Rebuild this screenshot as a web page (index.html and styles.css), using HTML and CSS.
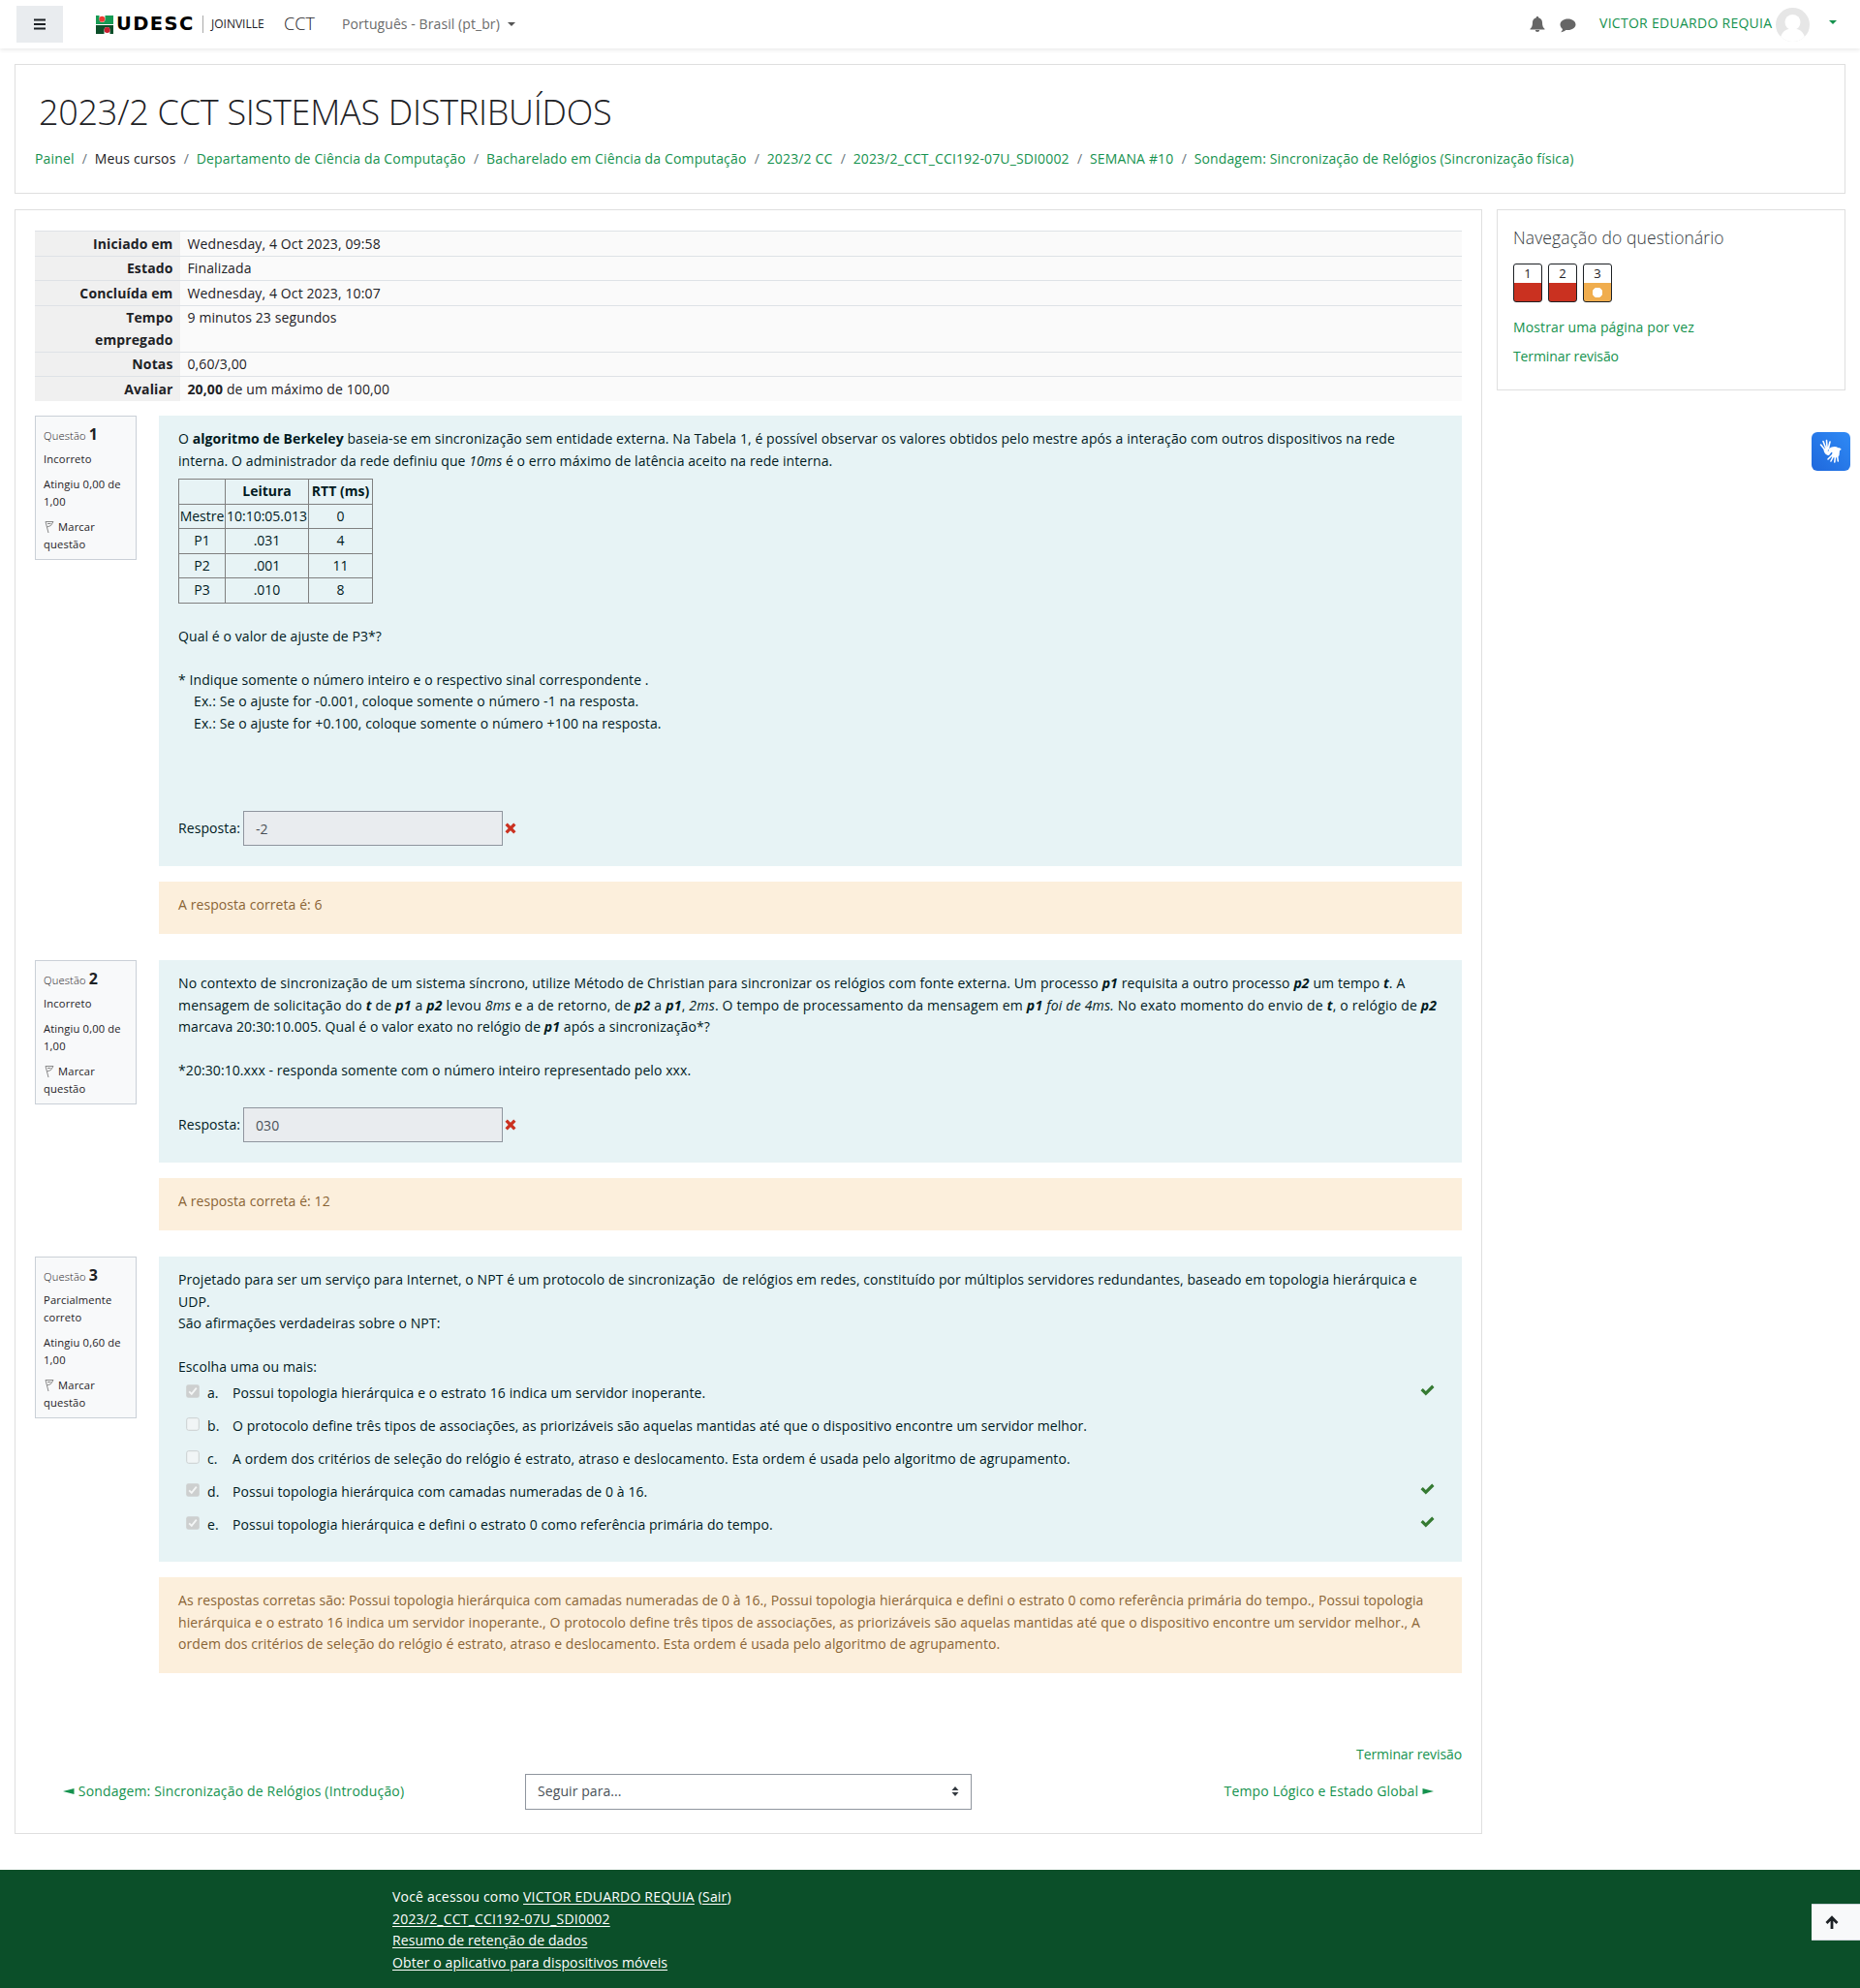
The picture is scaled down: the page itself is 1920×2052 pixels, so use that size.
FILE: index.html
```html
<!DOCTYPE html>
<html lang="pt-br">
<head>
<meta charset="utf-8">
<title>Sondagem: Sincronização de Relógios</title>
<link rel="stylesheet" href="styles.css">
</head>
<body>
<svg class="defs" width="0" height="0">
  <symbol id="flag" viewBox="0 0 10 14"><path d="M1 1.500l3 11.500M1 1.500h8L6.500 5.500l-4 1.500M3 3.500h3.500" fill="none" stroke="#888" stroke-width="1"/></symbol>
  <symbol id="times" viewBox="0 0 12 12"><path d="M2.800.5L6 3.700 9.200.5l2.300 2.300L8.300 6l3.200 3.200-2.300 2.300L6 8.300l-3.200 3.200L.5 9.200 3.700 6 .5 2.800z" fill="#ca3120"/></symbol>
  <symbol id="check" viewBox="0 0 15 12"><path d="M.5 6.300L2.800 4l3 3L12.200.6l2.300 2.300-8.700 8.700z" fill="#357a32"/></symbol>
  <symbol id="box-on" viewBox="0 0 14 14"><rect x=".2" y=".2" width="13.600" height="13.600" rx="2.200" fill="#cdcfcf"/><path d="M3.200 7.300l2.600 2.600 5-6.300" fill="none" stroke="#f4f6f6" stroke-width="1.800"/></symbol>
  <symbol id="box-off" viewBox="0 0 14 14"><rect x=".7" y=".7" width="12.600" height="12.600" rx="2" fill="#f1f5f6" stroke="#cbcfd0"/></symbol>
</svg>

<header class="navbar">
  <button class="menu-btn"><svg width="12" height="12" viewBox="0 0 12 12"><path d="M0 1.500h12M0 6h12M0 10.500h12" stroke="#1d2125" stroke-width="2"/></svg></button>
  <div class="logo">
    <svg width="18" height="19" viewBox="0 0 18 19"><path d="M0 0h3.500v4a3 3 0 0 0 6 0V0H18v9H0z" fill="#169b54"/><path d="M0 10h18v9h-3.500v-4a3 3 0 0 0-6 0v4H0z" fill="#0b4f29"/><circle cx="6.300" cy="3.700" r="3" fill="#ee3b34"/><circle cx="11.600" cy="15" r="3" fill="#c92032"/></svg>
    <span class="logo-name">UDESC</span><span class="logo-campus">JOINVILLE</span>
  </div>
  <span class="site">CCT</span>
  <span class="lang">Português - Brasil (pt_br)</span><i class="caret"></i>
  <div class="user">
    <svg class="bell" width="16" height="16" viewBox="0 0 16 16"><path d="M8 0c.8 0 1.200.5 1.200 1.200C11.600 1.800 13 3.700 13 6c0 4 1 5.500 2.500 6.800V13.500H.5v-.7C2 11.500 3 10 3 6c0-2.300 1.400-4.200 3.800-4.800C6.800.5 7.200 0 8 0zM5.800 14h4.400a2.200 2 0 0 1-4.400 0z" fill="#666"/></svg>
    <svg class="chat" width="17" height="15" viewBox="0 0 17 15"><path d="M8.500.5c4.500 0 8 2.600 8 5.800s-3.500 5.800-8 5.800c-.8 0-1.500 0-2.200-.2C4.800 13.300 3 14 1 14.200c1-.8 1.800-1.900 2-3.300C1.400 9.700.5 8.100.5 6.300.5 3.100 4 .5 8.500.5z" fill="#666"/></svg>
    <a class="user-name">VICTOR EDUARDO REQUIA</a>
    <svg class="avatar" width="35" height="35" viewBox="0 0 35 35"><defs><clipPath id="round"><circle cx="17.500" cy="17.500" r="17.500"/></clipPath></defs><g clip-path="url(#round)"><rect width="35" height="35" fill="#e6e6e6"/><circle cx="17.500" cy="15" r="8" fill="#fff"/><path d="M4 35c1-8 5-13 10-13h7c5 0 9 5 10 13z" fill="#fff"/></g></svg>
    <i class="caret green"></i>
  </div>
</header>

<section class="card page-head">
  <h1>2023/2 CCT SISTEMAS DISTRIBUÍDOS</h1>
  <nav class="crumbs"><a>Painel</a><i>/</i><span>Meus cursos</span><i>/</i><a>Departamento de Ciência da Computação</a><i>/</i><a>Bacharelado em Ciência da Computação</a><i>/</i><a>2023/2 CC</a><i>/</i><a>2023/2_CCT_CCI192-07U_SDI0002</a><i>/</i><a>SEMANA #10</a><i>/</i><a>Sondagem: Sincronização de Relógios (Sincronização física)</a></nav>
</section>

<div class="columns">
  <main class="card main">
    <table class="summary">
      <tr><th>Iniciado em</th><td>Wednesday, 4 Oct 2023, 09:58</td></tr>
      <tr><th>Estado</th><td>Finalizada</td></tr>
      <tr><th>Concluída em</th><td>Wednesday, 4 Oct 2023, 10:07</td></tr>
      <tr><th>Tempo<br>empregado</th><td>9 minutos 23 segundos</td></tr>
      <tr><th>Notas</th><td>0,60/3,00</td></tr>
      <tr><th>Avaliar</th><td><b>20,00</b> de um máximo de 100,00</td></tr>
    </table>

    <section class="question">
      <aside class="info"><h3>Questão <b>1</b></h3><p>Incorreto</p><p>Atingiu 0,00 de<br>1,00</p><p class="mark"><svg width="10" height="14"><use href="#flag"/></svg> Marcar<br>questão</p></aside>
      <div class="content">
        <div class="formulation q1">
          <p>O <b>algoritmo de Berkeley</b> baseia-se em sincronização sem entidade externa. Na Tabela 1, é possível observar os valores obtidos pelo mestre após a interação com outros dispositivos na rede<br>interna. O administrador da rede definiu que <em>10ms</em> é o erro máximo de latência aceito na rede interna.</p>
          <table class="readings">
            <tr><th></th><th>Leitura</th><th>RTT (ms)</th></tr>
            <tr><td>Mestre</td><td>10:10:05.013</td><td>0</td></tr>
            <tr><td>P1</td><td>.031</td><td>4</td></tr>
            <tr><td>P2</td><td>.001</td><td>11</td></tr>
            <tr><td>P3</td><td>.010</td><td>8</td></tr>
          </table>
          <p>Qual é o valor de ajuste de P3*?<br><br>* Indique somente o número inteiro e o respectivo sinal correspondente .</p>
          <p class="indent">Ex.: Se o ajuste for -0.001, coloque somente o número -1 na resposta.<br>Ex.: Se o ajuste for +0.100, coloque somente o número +100 na resposta.</p>
          <div class="answer"><span>Resposta:</span><div class="field">-2</div><svg width="12" height="12"><use href="#times"/></svg></div>
        </div>
        <div class="outcome">A resposta correta é: 6</div>
      </div>
    </section>

    <section class="question">
      <aside class="info"><h3>Questão <b>2</b></h3><p>Incorreto</p><p>Atingiu 0,00 de<br>1,00</p><p class="mark"><svg width="10" height="14"><use href="#flag"/></svg> Marcar<br>questão</p></aside>
      <div class="content">
        <div class="formulation q2">
          <p><span class="airy">No contexto de sincronização de um sistema síncrono, utilize Método de Christian para sincronizar os relógios com fonte externa. Um processo <b><em>p1</em></b> requisita a outro processo <b><em>p2</em></b> um tempo <b><em>t</em></b>. A</span><br><span class="airiest">mensagem de solicitação do <b><em>t</em></b> de <b><em>p1</em></b> a <b><em>p2</em></b> levou <em>8ms</em> e a de retorno, de <b><em>p2</em></b> a <b><em>p1</em></b>, <em>2ms</em>. O tempo de processamento da mensagem em <b><em>p1</em></b> <em>foi de 4ms.</em> No exato momento do envio de <b><em>t</em></b>, o relógio de <b><em>p2</em></b></span><br>marcava 20:30:10.005. Qual é o valor exato no relógio de <b><em>p1</em></b> após a sincronização*?<br><br>*20:30:10.xxx - responda somente com o número inteiro representado pelo xxx.</p>
          <div class="answer"><span>Resposta:</span><div class="field">030</div><svg width="12" height="12"><use href="#times"/></svg></div>
        </div>
        <div class="outcome">A resposta correta é: 12</div>
      </div>
    </section>

    <section class="question">
      <aside class="info"><h3>Questão <b>3</b></h3><p>Parcialmente<br>correto</p><p>Atingiu 0,60 de<br>1,00</p><p class="mark"><svg width="10" height="14"><use href="#flag"/></svg> Marcar<br>questão</p></aside>
      <div class="content">
        <div class="formulation q3">
          <p>Projetado para ser um serviço para Internet, o NPT é um protocolo de sincronização&nbsp; de relógios em redes, constituído por múltiplos servidores redundantes, baseado em topologia hierárquica e<br>UDP.<br>São afirmações verdadeiras sobre o NPT:<br><br>Escolha uma ou mais:</p>
          <ul class="options">
            <li><svg class="box" width="14" height="14"><use href="#box-on"/></svg><span class="letter">a.</span><span>Possui topologia hierárquica e o estrato 16 indica um servidor inoperante.</span><svg class="tick" width="15" height="12"><use href="#check"/></svg></li>
            <li><svg class="box" width="14" height="14"><use href="#box-off"/></svg><span class="letter">b.</span><span>O protocolo define três tipos de associações, as priorizáveis são aquelas mantidas até que o dispositivo encontre um servidor melhor.</span></li>
            <li><svg class="box" width="14" height="14"><use href="#box-off"/></svg><span class="letter">c.</span><span class="airy">A ordem dos critérios de seleção do relógio é estrato, atraso e deslocamento. Esta ordem é usada pelo algoritmo de agrupamento.</span></li>
            <li><svg class="box" width="14" height="14"><use href="#box-on"/></svg><span class="letter">d.</span><span>Possui topologia hierárquica com camadas numeradas de 0 à 16.</span><svg class="tick" width="15" height="12"><use href="#check"/></svg></li>
            <li><svg class="box" width="14" height="14"><use href="#box-on"/></svg><span class="letter">e.</span><span>Possui topologia hierárquica e defini o estrato 0 como referência primária do tempo.</span><svg class="tick" width="15" height="12"><use href="#check"/></svg></li>
          </ul>
        </div>
        <div class="outcome">As respostas corretas são: Possui topologia hierárquica com camadas numeradas de 0 à 16., Possui topologia hierárquica e defini o estrato 0 como referência primária do tempo., Possui topologia<br>hierárquica e o estrato 16 indica um servidor inoperante., O protocolo define três tipos de associações, as priorizáveis são aquelas mantidas até que o dispositivo encontre um servidor melhor., A<br>ordem dos critérios de seleção do relógio é estrato, atraso e deslocamento. Esta ordem é usada pelo algoritmo de agrupamento.</div>
      </div>
    </section>

    <div class="finish"><a>Terminar revisão</a></div>
    <div class="activity-nav">
      <a><svg width="12" height="6" viewBox="0 0 12 6"><path d="M0 3L11.500 0v6z" fill="#15924e"/></svg> Sondagem: Sincronização de Relógios (Introdução)</a>
      <div class="jump"><span>Seguir para...</span><svg width="8" height="10" viewBox="0 0 8 10"><path d="M4 0l3.500 4h-7zM4 10L.5 6h7z" fill="#343a40"/></svg></div>
      <a class="next">Tempo Lógico e Estado Global <svg width="12" height="6" viewBox="0 0 12 6"><path d="M12 3L.5 0v6z" fill="#15924e"/></svg></a>
    </div>
  </main>

  <aside class="card side">
    <h5>Navegação do questionário</h5>
    <div class="qn"><span class="qbtn">1</span><span class="qbtn">2</span><span class="qbtn partial">3</span></div>
    <a>Mostrar uma página por vez</a>
    <a class="end">Terminar revisão</a>
  </aside>
</div>

<footer class="footer">
  <div class="airiest">Você acessou como <u>VICTOR EDUARDO REQUIA</u> (<u>Sair</u>)</div>
  <div class="airiest"><u>2023/2_CCT_CCI192-07U_SDI0002</u></div>
  <div class="airy"><u>Resumo de retenção de dados</u></div>
  <div class="airy"><u>Obter o aplicativo para dispositivos móveis</u></div>
</footer>

<div class="sign-widget"><svg width="24" height="26" viewBox="0 0 24 26"><g fill="none" stroke="#fff" stroke-linecap="round"><path d="M5.500 11L1.500 6M6.500 9L4 2.500M8 8.500L7.500 1.500M9.500 9L11 3" stroke-width="1.600"/><path d="M13 17l-4 4M14.500 18l-2.500 5M16.500 18L15.800 24M18.500 17l.8 6" stroke-width="1.600"/></g><path d="M4.500 10.500l5.500-3 .5 2.500-2 2.500 4.500.5-3 4C7 17 4.500 14.500 4.500 10.500z" fill="#fff"/><path d="M10 10.500c3-3 7-3 9.500-1.200 2 0 2.700.5 3.200 1.700l-1.700 1-.5 5c-1 2.500-5 3.500-8 1l1-4-4-1.300z" fill="#fff"/></svg></div>
<div class="to-top"><svg width="14" height="15" viewBox="0 0 14 15"><path d="M7 14V2.500M1.500 8L7 2.300 12.500 8" fill="none" stroke="#1d2125" stroke-width="2.800"/></svg></div>
</body>
</html>
```
FILE: styles.css
```css
* { box-sizing: border-box; }
body { margin: 0; width: 1920px; height: 2052px; position: relative; background: #fff; font: 14px/22.5px "Open Sans", sans-serif; letter-spacing: .08px; color: #1d2125; white-space: nowrap; }
h1, h3, h5, p, ul { margin: 0; padding: 0; font-weight: 400; }
i { font-style: normal; }
svg { display: block; flex: none; }
.defs { position: absolute; }
a { color: #15924e; }
.card { border: 1px solid #dfdfdf; background: #fff; }
.airy { letter-spacing: .11px; }
.airiest { letter-spacing: .2px; }

.navbar { height: 50px; display: flex; align-items: center; padding-left: 17px; box-shadow: 0 2px 4px rgba(0,0,0,.08); }
.menu-btn { width: 48px; height: 38px; padding: 0; border: 0; background: #e9ecef; display: flex; align-items: center; justify-content: center; }
.logo { width: 194px; margin-left: 34px; display: flex; align-items: center; }
.logo-name { font: bold 19.500px/18px "DejaVu Sans", sans-serif; letter-spacing: 1.400px; color: #000; width: 90px; margin-left: 3px; border-right: 1px solid #aaa; }
.logo-campus { font: 12px/18px "Open Sans", sans-serif; letter-spacing: 0; margin-left: 8px; }
.site { width: 60px; margin-top: -2px; font-size: 18px; font-weight: 300; }
.lang { width: 171px; color: #6b6b6b; }
.caret { border: 4px solid transparent; border-top-color: #555; border-bottom: 0; }
.caret.green { border-top-color: #15924e; margin: 0 24px 4px 20px; }
.user { margin-left: auto; display: flex; align-items: center; }
.chat { margin: 2px 24px 0 15px; }
.user-name { width: 182px; margin-bottom: 2px; letter-spacing: .28px; }

.page-head { height: 134px; margin: 16px 15px 0; padding: 26px 20px 0; }
h1 { font-size: 36px; line-height: 45px; font-weight: 300; letter-spacing: -.26px; padding-left: 4px; }
.crumbs { display: flex; margin-top: 14.500px; letter-spacing: .14px; }
.crumbs i { padding: 0 7.700px 0 8.300px; color: #6c757d; }

.columns { display: flex; align-items: flex-start; gap: 15px; margin: 16px 15px 0; }
.main { width: 1515px; height: 1677px; padding: 21px 20px 0; }
.side { width: 360px; height: 187px; padding: 14.500px 16px 0; }

.summary { width: 1473px; border-spacing: 0; letter-spacing: .12px; }
.summary th, .summary td { padding: 1.500px 7.500px .5px; border-top: 1px solid #dee2e6; vertical-align: top; text-align: left; background: #fafafa; }
.summary th { width: 150px; text-align: right; background: #f0f0f0; }

.question { display: flex; justify-content: space-between; align-items: flex-start; margin-top: 15.500px; }
.question + .question { margin-top: 27px; }
.info { width: 105px; padding: 7px 8px 6px; border: 1px solid #cad0d7; background: #f8f9fa; font-size: 11.200px; line-height: 18px; letter-spacing: .15px; }
.info h3 { font-size: 11.200px; line-height: 22.500px; font-weight: 300; }
.info h3 b { font-size: 16px; font-weight: 700; }
.info p { margin: 3px 0 8.300px; }
.info p.mark { margin-bottom: 0; }
.mark svg { display: inline-block; vertical-align: -3px; margin: 0 1px; }
.content { width: 1345px; }
.formulation { padding: 13px 20px 0; background: #e7f3f5; color: #001a1e; }
.q1 { height: 465px; }
.q2 { height: 209px; }
.q3 { height: 315px; }
.readings { border-collapse: collapse; table-layout: fixed; width: 201px; margin: 7px 0 23px; text-align: center; letter-spacing: 0; }
.readings th, .readings td { border: 1px solid #808080; padding: 1px 0; height: 25.500px; }
.readings th:first-child { width: 48px; }
.readings th:nth-child(2) { width: 86px; }
.indent { padding-left: 16px; letter-spacing: .115px; }
.answer { display: flex; align-items: center; }
.q1 .answer { margin-top: 79px; }
.q2 .answer { margin-top: 26px; }
.answer span { width: 67px; padding-top: 1px; }
.field { width: 268px; height: 36px; border: 1px solid #8f959e; background: #e9ecef; color: #495057; padding: 7px 12px 0; margin-right: 2px; }
.options { list-style: none; padding-left: 8px; margin-top: 4px; }
.options li { display: flex; align-items: center; height: 34px; padding-bottom: 11.500px; }
.box { margin: -3px 8px 0 0; }
.letter { width: 26px; }
.tick { margin: -6px 8px 0 auto; }
.outcome { margin-top: 16px; padding: 13px 20px 18.500px; background: #fcefdc; color: #8a6435; }

.finish { margin-top: 73px; text-align: right; letter-spacing: -.1px; }
.activity-nav { display: flex; align-items: center; margin-top: 8px; padding: 0 29px; }
.activity-nav a { letter-spacing: .16px; }
.activity-nav a svg { display: inline-block; vertical-align: 2px; }
.jump { width: 461px; height: 37px; border: 1px solid #8f959e; margin-left: 125px; padding: 0 12px; display: flex; align-items: center; justify-content: space-between; color: #495057; }
.activity-nav > a:first-child { width: 352px; }
.next { margin-left: auto; }

h5 { font-size: 17.500px; line-height: 26px; font-weight: 300; letter-spacing: .12px; color: #343a40; }
.qn { display: flex; gap: 6px; margin: 14.500px 0 15px; }
.qbtn { width: 30px; height: 40px; border: 1px solid #1d2125; border-radius: 3px; text-align: center; font-size: 13px; line-height: 19px; background: linear-gradient(#fff 19px, #ca3120 19px); }
.qbtn.partial { background: radial-gradient(circle at 14px 29px, #fff 5px, transparent 5.500px), linear-gradient(#fff 19px, #f0ad4e 19px); }
.side a { display: block; margin-bottom: 7.500px; letter-spacing: .12px; }
.side a.end { letter-spacing: -.1px; }

.footer { margin-top: 37px; height: 122px; padding: 17px 0 0 405px; background: #0b4f29; color: #fff; }
.footer u { text-underline-offset: 2px; }
.sign-widget { position: absolute; left: 1870px; top: 446px; width: 40px; height: 40px; border-radius: 6px; background: linear-gradient(45deg, #1f68dc, #2f8af5); display: flex; align-items: center; justify-content: center; }
.to-top { position: absolute; left: 1870px; top: 1965px; width: 50px; height: 38px; background: #f8f9fa; border: solid #ced4da; border-width: 1px 0; display: flex; align-items: center; padding-left: 14px; }
```
